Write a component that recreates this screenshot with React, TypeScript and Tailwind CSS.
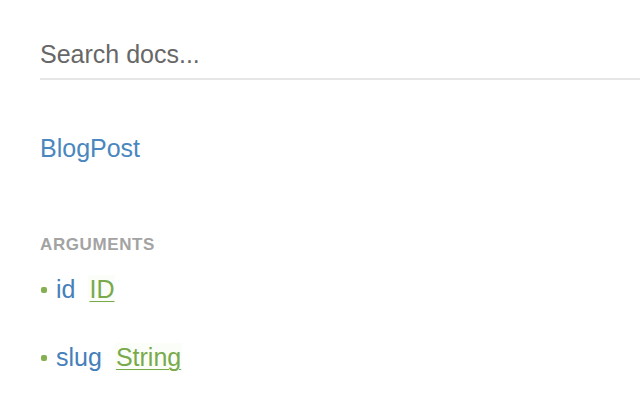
import React from "react";

function Arg({ name, type }: { name: string; type: string }) {
  return (
    <div className="flex items-center h-[28px] leading-[28px] text-[25px]">
      <span className="block w-[6px] h-[6px] rounded-[2px] bg-[#84b052] ml-[1px] mt-[1px]" />
      <span className="ml-[9px] text-[#4680ba]">{name}</span>
      <span className="ml-[13px] px-[1px] text-[#78aa4c] bg-[#fbfdf8] underline underline-offset-[3px] decoration-1">{type}</span>
    </div>
  );
}

export default function App() {
  return (
    <div
      className="w-[640px] h-[419px] bg-white overflow-hidden pl-[40px]"
      style={{ fontFamily: '"Liberation Sans", Arial, sans-serif' }}
    >
      <div className="pt-[40px] pb-[10px] border-b-2 border-[#e6e6e6]">
        <input
          className="block w-full h-[28px] leading-[28px] text-[25px] text-[#555] placeholder:text-[#676767] outline-none bg-transparent p-0"
          placeholder="Search docs..."
        />
      </div>
      <div className="mt-[54px] h-[28px] leading-[28px] text-[25px] text-[#4a87be]">BlogPost</div>
      <div className="mt-[73px] h-[20px] leading-[20px] text-[17px] font-bold tracking-[0.6px] text-[#a3a3a3] uppercase">
        Arguments
      </div>
      <div className="mt-[20px]">
        <Arg name="id" type="ID" />
      </div>
      <div className="mt-[40px]">
        <Arg name="slug" type="String" />
      </div>
    </div>
  );
}
